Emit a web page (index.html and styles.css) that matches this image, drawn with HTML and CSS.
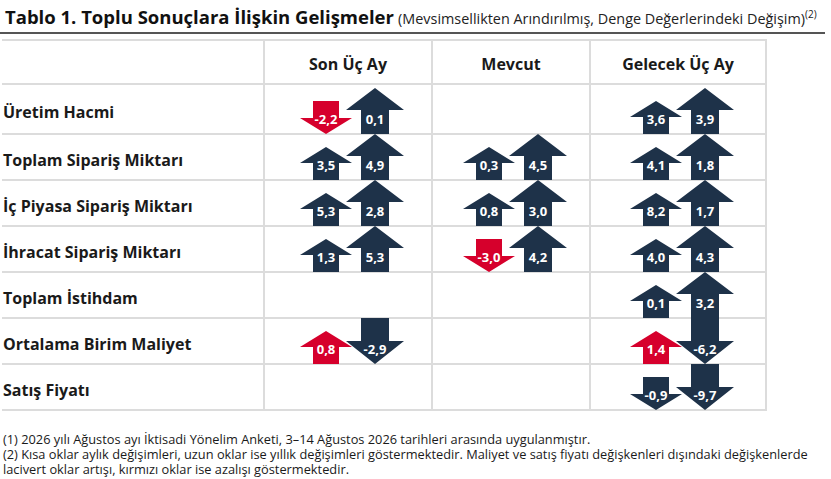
FILE: index.html
```html
<!DOCTYPE html>
<html lang="tr">
<head>
<meta charset="utf-8">
<title>Tablo 1</title>
<link rel="stylesheet" href="styles.css">
</head>
<body>
<div class="page">
  <div class="title"><b>Tablo 1. Toplu Sonuçlara İlişkin Gelişmeler</b> <span class="sub">(Mevsimsellikten Arındırılmış, Denge Değerlerindeki Değişim)<sup>(2)</sup></span></div>

  <div class="table">
    <div class="cell head label"></div>
    <div class="cell head col">Son Üç Ay</div>
    <div class="cell head col">Mevcut</div>
    <div class="cell head col last">Gelecek Üç Ay</div>

    <div class="cell label first">Üretim Hacmi</div>
    <div class="cell arrows first">
      <div class="arrow red"><svg width="52" height="33" viewBox="0 0 52 33"><polygon points="13,0 39,0 39,17 52,17 26,33 0,17 13,17"/></svg><span>-2,2</span></div>
      <div class="arrow long navy"><svg width="58" height="46" viewBox="0 0 58 46"><polygon points="29,0 58,22 43,22 43,46 15,46 15,22 0,22"/></svg><span>0,1</span></div>
    </div>
    <div class="cell arrows first"></div>
    <div class="cell arrows first last">
      <div class="arrow navy"><svg width="52" height="33" viewBox="0 0 52 33"><polygon points="26,0 52,16 39,16 39,33 13,33 13,16 0,16"/></svg><span>3,6</span></div>
      <div class="arrow long navy"><svg width="58" height="46" viewBox="0 0 58 46"><polygon points="29,0 58,22 43,22 43,46 15,46 15,22 0,22"/></svg><span>3,9</span></div>
    </div>

    <div class="cell label">Toplam Sipariş Miktarı</div>
    <div class="cell arrows">
      <div class="arrow navy"><svg width="52" height="33" viewBox="0 0 52 33"><polygon points="26,0 52,16 39,16 39,33 13,33 13,16 0,16"/></svg><span>3,5</span></div>
      <div class="arrow long navy"><svg width="58" height="46" viewBox="0 0 58 46"><polygon points="29,0 58,22 43,22 43,46 15,46 15,22 0,22"/></svg><span>4,9</span></div>
    </div>
    <div class="cell arrows">
      <div class="arrow navy"><svg width="52" height="33" viewBox="0 0 52 33"><polygon points="26,0 52,16 39,16 39,33 13,33 13,16 0,16"/></svg><span>0,3</span></div>
      <div class="arrow long navy"><svg width="58" height="46" viewBox="0 0 58 46"><polygon points="29,0 58,22 43,22 43,46 15,46 15,22 0,22"/></svg><span>4,5</span></div>
    </div>
    <div class="cell arrows last">
      <div class="arrow navy"><svg width="52" height="33" viewBox="0 0 52 33"><polygon points="26,0 52,16 39,16 39,33 13,33 13,16 0,16"/></svg><span>4,1</span></div>
      <div class="arrow long navy"><svg width="58" height="46" viewBox="0 0 58 46"><polygon points="29,0 58,22 43,22 43,46 15,46 15,22 0,22"/></svg><span>1,8</span></div>
    </div>

    <div class="cell label">İç Piyasa Sipariş Miktarı</div>
    <div class="cell arrows">
      <div class="arrow navy"><svg width="52" height="33" viewBox="0 0 52 33"><polygon points="26,0 52,16 39,16 39,33 13,33 13,16 0,16"/></svg><span>5,3</span></div>
      <div class="arrow long navy"><svg width="58" height="46" viewBox="0 0 58 46"><polygon points="29,0 58,22 43,22 43,46 15,46 15,22 0,22"/></svg><span>2,8</span></div>
    </div>
    <div class="cell arrows">
      <div class="arrow navy"><svg width="52" height="33" viewBox="0 0 52 33"><polygon points="26,0 52,16 39,16 39,33 13,33 13,16 0,16"/></svg><span>0,8</span></div>
      <div class="arrow long navy"><svg width="58" height="46" viewBox="0 0 58 46"><polygon points="29,0 58,22 43,22 43,46 15,46 15,22 0,22"/></svg><span>3,0</span></div>
    </div>
    <div class="cell arrows last">
      <div class="arrow navy"><svg width="52" height="33" viewBox="0 0 52 33"><polygon points="26,0 52,16 39,16 39,33 13,33 13,16 0,16"/></svg><span>8,2</span></div>
      <div class="arrow long navy"><svg width="58" height="46" viewBox="0 0 58 46"><polygon points="29,0 58,22 43,22 43,46 15,46 15,22 0,22"/></svg><span>1,7</span></div>
    </div>

    <div class="cell label">İhracat Sipariş Miktarı</div>
    <div class="cell arrows">
      <div class="arrow navy"><svg width="52" height="33" viewBox="0 0 52 33"><polygon points="26,0 52,16 39,16 39,33 13,33 13,16 0,16"/></svg><span>1,3</span></div>
      <div class="arrow long navy"><svg width="58" height="46" viewBox="0 0 58 46"><polygon points="29,0 58,22 43,22 43,46 15,46 15,22 0,22"/></svg><span>5,3</span></div>
    </div>
    <div class="cell arrows">
      <div class="arrow red"><svg width="52" height="33" viewBox="0 0 52 33"><polygon points="13,0 39,0 39,17 52,17 26,33 0,17 13,17"/></svg><span>-3,0</span></div>
      <div class="arrow long navy"><svg width="58" height="46" viewBox="0 0 58 46"><polygon points="29,0 58,22 43,22 43,46 15,46 15,22 0,22"/></svg><span>4,2</span></div>
    </div>
    <div class="cell arrows last">
      <div class="arrow navy"><svg width="52" height="33" viewBox="0 0 52 33"><polygon points="26,0 52,16 39,16 39,33 13,33 13,16 0,16"/></svg><span>4,0</span></div>
      <div class="arrow long navy"><svg width="58" height="46" viewBox="0 0 58 46"><polygon points="29,0 58,22 43,22 43,46 15,46 15,22 0,22"/></svg><span>4,3</span></div>
    </div>

    <div class="cell label">Toplam İstihdam</div>
    <div class="cell arrows"></div>
    <div class="cell arrows"></div>
    <div class="cell arrows last">
      <div class="arrow navy"><svg width="52" height="33" viewBox="0 0 52 33"><polygon points="26,0 52,16 39,16 39,33 13,33 13,16 0,16"/></svg><span>0,1</span></div>
      <div class="arrow long navy"><svg width="58" height="46" viewBox="0 0 58 46"><polygon points="29,0 58,22 43,22 43,46 15,46 15,22 0,22"/></svg><span>3,2</span></div>
    </div>

    <div class="cell label">Ortalama Birim Maliyet</div>
    <div class="cell arrows">
      <div class="arrow red"><svg width="52" height="33" viewBox="0 0 52 33"><polygon points="26,0 52,16 39,16 39,33 13,33 13,16 0,16"/></svg><span>0,8</span></div>
      <div class="arrow long navy"><svg width="58" height="46" viewBox="0 0 58 46"><polygon points="15,0 43,0 43,23 58,23 29,46 0,23 15,23"/></svg><span>-2,9</span></div>
    </div>
    <div class="cell arrows"></div>
    <div class="cell arrows last">
      <div class="arrow red"><svg width="52" height="33" viewBox="0 0 52 33"><polygon points="26,0 52,16 39,16 39,33 13,33 13,16 0,16"/></svg><span>1,4</span></div>
      <div class="arrow long navy"><svg width="58" height="46" viewBox="0 0 58 46"><polygon points="15,0 43,0 43,23 58,23 29,46 0,23 15,23"/></svg><span>-6,2</span></div>
    </div>

    <div class="cell label">Satış Fiyatı</div>
    <div class="cell arrows"></div>
    <div class="cell arrows"></div>
    <div class="cell arrows last">
      <div class="arrow navy"><svg width="52" height="33" viewBox="0 0 52 33"><polygon points="13,0 39,0 39,17 52,17 26,33 0,17 13,17"/></svg><span>-0,9</span></div>
      <div class="arrow long navy"><svg width="58" height="46" viewBox="0 0 58 46"><polygon points="15,0 43,0 43,23 58,23 29,46 0,23 15,23"/></svg><span>-9,7</span></div>
    </div>
  </div>

  <div class="notes">
    <p>(1) 2026 yılı Ağustos ayı İktisadi Yönelim Anketi, 3–14 Ağustos 2026 tarihleri arasında uygulanmıştır.</p>
    <p>(2) Kısa oklar aylık değişimleri, uzun oklar ise yıllık değişimleri göstermektedir. Maliyet ve satış fiyatı değişkenleri dışındaki değişkenlerde</p>
    <p>lacivert oklar artışı, kırmızı oklar ise azalışı göstermektedir.</p>
  </div>
</div>
</body>
</html>
```

FILE: styles.css
```css
html, body {
  margin: 0;
  padding: 0;
  background: #ffffff;
}

.page {
  font-family: "Open Sans", "DejaVu Sans", sans-serif;
  color: #1a1a1a;
  width: 831px;
}

.title {
  width: 820px;
  padding: 5px 0 1px 5px;
  line-height: 24px;
  border-bottom: 2px solid #555555;
  white-space: nowrap;
}

.title b {
  font-size: 18.5px;
  font-weight: 700;
  color: #111111;
}

.title .sub {
  font-size: 14.4px;
  color: #222222;
}

.title sup {
  font-size: 10px;
  line-height: 0;
  vertical-align: 6px;
}

.table {
  margin: 5px 0 0 2px;
  display: grid;
  grid-template-columns: 261px 168px 158px 176px;
  width: 763px;
  border-top: 2px solid #dcdcdc;
  border-right: 2px solid #dcdcdc;
}

.cell {
  height: 44px;
  border-bottom: 2px solid #dcdcdc;
  display: flex;
  align-items: center;
}

.cell.head {
  padding-top: 3px;
  height: 39px;
  font-weight: 700;
  font-size: 16px;
  color: #1a1a1a;
}

.cell.col {
  justify-content: center;
  border-left: 2px solid #dcdcdc;
}

.cell.first {
  height: 48px;
}

.label {
  padding: 5px 0 0 1px;
  height: 39px;
  font-weight: 700;
  font-size: 16px;
  color: #1a1a1a;
}

.label.first {
  height: 43px;
}

.arrows {
  border-left: 2px solid #dcdcdc;
  padding-left: 8px;
  justify-content: center;
  align-items: flex-end;
}

.arrow {
  display: grid;
  position: relative;
  z-index: 1;
  margin-bottom: -1px;
}

.arrow > * {
  grid-area: 1 / 1;
}

.arrow svg {
  display: block;
}

.arrow.long {
  margin-left: -6px;
}

.navy svg {
  fill: #1e3249;
}

.red svg {
  fill: #d6002c;
}

.arrow span {
  align-self: end;
  justify-self: center;
  margin-bottom: 7px;
  color: #ffffff;
  font-weight: 700;
  font-size: 13px;
  line-height: 15px;
  white-space: nowrap;
}

.notes {
  margin-top: 21px;
  padding-left: 3px;
  font-size: 12.8px;
  line-height: 15px;
  color: #1a1a1a;
  white-space: nowrap;
}

.notes p {
  margin: 0;
}
```
